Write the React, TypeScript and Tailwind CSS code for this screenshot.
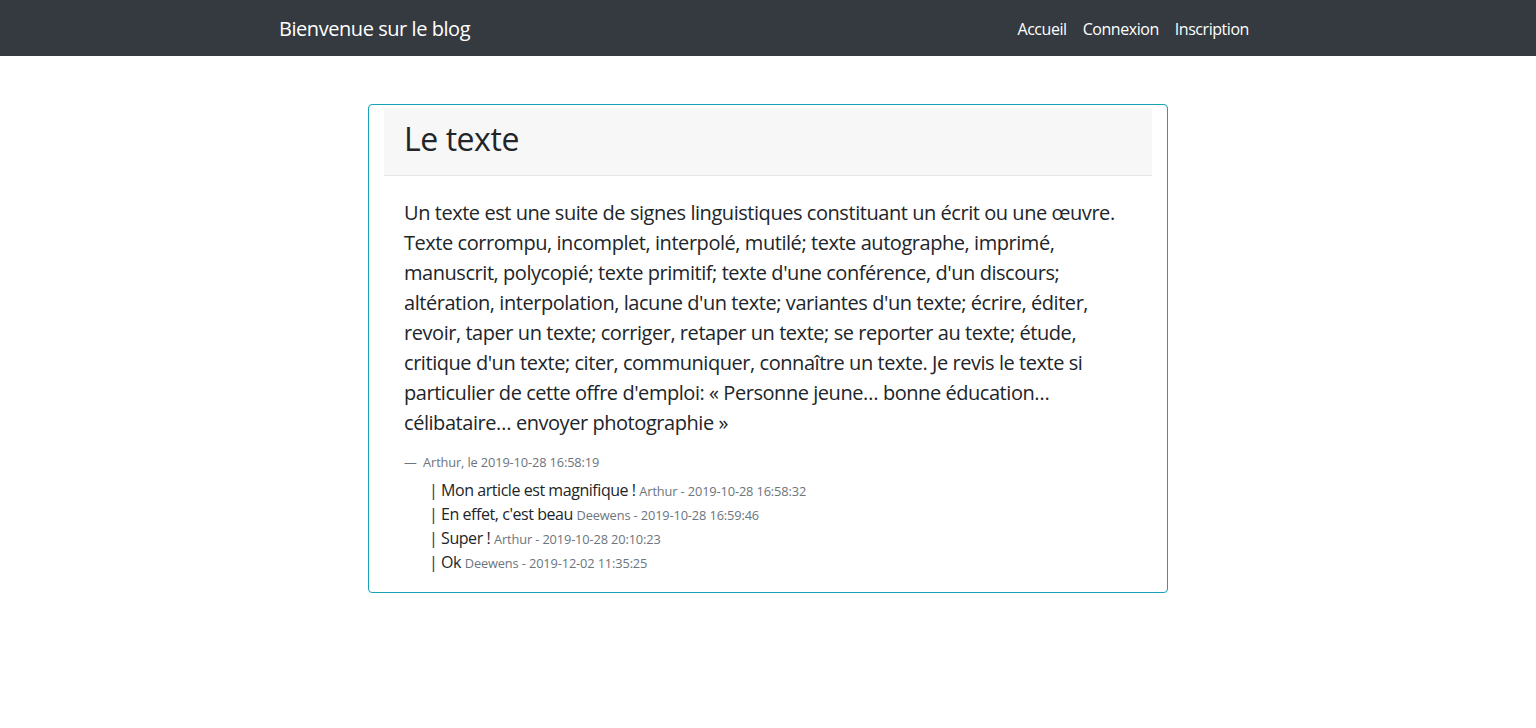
import { FC } from "react";

const lines = [
	"Un texte est une suite de signes linguistiques constituant un écrit ou une œuvre.",
	"Texte corrompu, incomplet, interpolé, mutilé; texte autographe, imprimé,",
	"manuscrit, polycopié; texte primitif; texte d'une conférence, d'un discours;",
	"altération, interpolation, lacune d'un texte; variantes d'un texte; écrire, éditer,",
	"revoir, taper un texte; corriger, retaper un texte; se reporter au texte; étude,",
	"critique d'un texte; citer, communiquer, connaître un texte. Je revis le texte si",
	"particulier de cette offre d'emploi: « Personne jeune… bonne éducation…",
	"célibataire… envoyer photographie »",
];

const comments = [
	{ text: "Mon article est magnifique !", author: "Arthur", date: "2019-10-28 16:58:32" },
	{ text: "En effet, c'est beau", author: "Deewens", date: "2019-10-28 16:59:46" },
	{ text: "Super !", author: "Arthur", date: "2019-10-28 20:10:23" },
	{ text: "Ok", author: "Deewens", date: "2019-12-02 11:35:25" },
];

const App: FC = () => {
	return (
		<div className="min-h-screen bg-white text-[#212529] font-['Open_Sans',sans-serif] tracking-[-0.028em]">
			<nav className="h-14 bg-[#343a40]">
				<div className="mx-auto flex h-full w-[978px] items-center justify-between pt-[2px]">
					<a className="text-[20px] leading-[30px] text-white">Bienvenue sur le blog</a>
					<ul className="flex gap-4 pr-2 text-[16px] text-white">
						<li>Accueil</li>
						<li>Connexion</li>
						<li>Inscription</li>
					</ul>
				</div>
			</nav>

			<main className="mt-12">
				<article className="mx-auto w-[800px] rounded-[4px] border border-[#17a2b8] px-[15px] pt-[3px] pb-[18px]">
					<header className="flex h-[68px] items-center border-b border-[#e6e6e6] bg-[#f7f7f7] px-5 pb-[5px]">
						<h2 className="text-[32px] leading-[38px]">Le texte</h2>
					</header>
					<div className="px-5 pt-[22px]">
						<p className="text-[20px] leading-[30px]">
							{lines.map((l) => (
								<span key={l} className="block whitespace-nowrap">
									{l}
								</span>
							))}
						</p>
						<footer className="mt-[15px] text-[12.8px] leading-[19px] tracking-[-0.01em] text-[#6c757d]">
							—&nbsp; Arthur, le 2019-10-28 16:58:19
						</footer>
						<ul className="mt-[6px] pl-[25px]">
							{comments.map((c) => (
								<li key={c.date} className="h-6 text-[16px] leading-[24px] whitespace-nowrap">
									<span className="text-[#2a3350]">|</span> {c.text}{" "}
									<small className="text-[12.8px] leading-none tracking-[-0.01em] text-[#6c757d]">
										{c.author} - {c.date}
									</small>
								</li>
							))}
						</ul>
					</div>
				</article>
			</main>
		</div>
	);
};

export default App;
